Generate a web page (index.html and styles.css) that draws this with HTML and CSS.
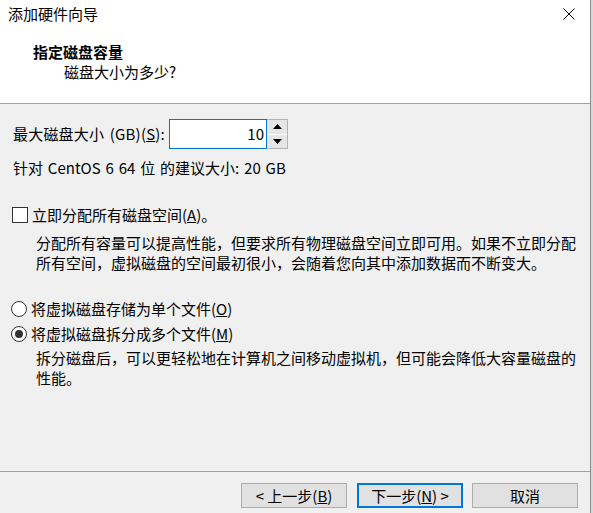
FILE: index.html
```html
<!DOCTYPE html>
<html lang="zh-CN">
<head>
<meta charset="utf-8">
<title>添加硬件向导</title>
<link rel="stylesheet" href="styles.css">
</head>
<body>
<div class="window">
  <div class="header">
    <div class="titlebar">
      <span class="title">添加硬件向导</span>
      <svg class="close" width="12" height="12" viewBox="0 0 12 12"><path d="M0.5 0.5 L11.5 11.5 M11.5 0.5 L0.5 11.5" stroke="#000" stroke-width="1" fill="none"/></svg>
    </div>
    <div class="heading">指定磁盘容量</div>
    <div class="subheading">磁盘大小为多少?</div>
  </div>
  <div class="content">
    <div class="size-row">
      <span class="label">最大磁盘大小 (GB)(<u>S</u>):</span>
      <div class="spin">
        <div class="spin-input">10</div>
        <div class="spin-buttons">
          <div class="spin-btn"><svg width="9" height="5" viewBox="0 0 9 5"><path d="M4.5 0 L9 5 L0 5 Z" fill="#000"/></svg></div>
          <div class="spin-btn"><svg width="9" height="5" viewBox="0 0 9 5"><path d="M0 0 L9 0 L4.5 5 Z" fill="#000"/></svg></div>
        </div>
      </div>
    </div>
    <div class="recommend">针对 CentOS 6 64 位 的建议大小: 20 GB</div>
    <div class="option check-option">
      <span class="checkbox"></span>
      <span>立即分配所有磁盘空间(<u>A</u>)。</span>
    </div>
    <p class="desc">分配所有容量可以提高性能，但要求所有物理磁盘空间立即可用。如果不立即分配所有空间，虚拟磁盘的空间最初很小，会随着您向其中添加数据而不断变大。</p>
    <div class="option radio-first">
      <span class="radio"></span>
      <span>将虚拟磁盘存储为单个文件(<u>O</u>)</span>
    </div>
    <div class="option radio-second">
      <span class="radio checked"></span>
      <span>将虚拟磁盘拆分成多个文件(<u>M</u>)</span>
    </div>
    <p class="desc desc-split">拆分磁盘后，可以更轻松地在计算机之间移动虚拟机，但可能会降低大容量磁盘的性能。</p>
  </div>
  <div class="footer">
    <button class="btn">&lt; 上一步(<u>B</u>)</button>
    <button class="btn btn-default">下一步(<u>N</u>) &gt;</button>
    <button class="btn btn-cancel">取消</button>
  </div>
</div>
</body>
</html>
```

FILE: styles.css
```css
html, body {
  margin: 0;
  padding: 0;
  background: #d9d9d9;
}
body {
  width: 593px;
  height: 513px;
  overflow: hidden;
  font-family: "Noto Sans CJK SC", sans-serif;
  font-size: 15px;
  line-height: 20px;
  color: #000;
}
.window {
  width: 590px;
  height: 513px;
  background: #f0f0f0;
  border-right: 1px solid #8a8a8a;
  display: flex;
  flex-direction: column;
}
.header {
  background: #fff;
  height: 103px;
  border-bottom: 1px solid #a0a0a0;
  box-sizing: content-box;
}
.titlebar {
  height: 28px;
  padding: 4px 0 0 8px;
  box-sizing: border-box;
  display: flex;
  align-items: flex-start;
  justify-content: space-between;
}
.close {
  margin: 4px 15px 0 0;
}
.heading {
  margin: 14px 0 0 33px;
  font-weight: bold;
}
.subheading {
  margin-left: 64px;
}
.content {
  flex: 1;
  padding: 15px 0 0 13px;
}
.size-row {
  display: flex;
  align-items: center;
  height: 30px;
}
.label {
  width: 156px;
  word-spacing: 2px;
  letter-spacing: 0.2px;
}
.spin {
  display: flex;
  height: 30px;
}
.spin-input {
  width: 98px;
  height: 30px;
  box-sizing: border-box;
  border: 1px solid #0078d7;
  background: #fff;
  text-align: right;
  padding: 4px 2px 0 0;
}
.spin-buttons {
  width: 21px;
  height: 30px;
  box-sizing: border-box;
  border: 1px solid #b4b4b4;
  border-left: none;
  display: flex;
  flex-direction: column;
  gap: 1px;
  background: #fff;
}
.spin-btn {
  flex: 1;
  background: #e6e6e6;
  display: flex;
  align-items: center;
  justify-content: center;
}
.recommend {
  margin-top: 9px;
  word-spacing: 1.5px;
}
.option {
  display: flex;
  align-items: center;
}
.check-option {
  margin-top: 27px;
}
.checkbox {
  width: 14px;
  height: 14px;
  border: 1px solid #333;
  background: #fff;
  margin: 0 4px 0 -1px;
}
.desc {
  margin: 8px 10px 0 23px;
}
.radio-first {
  margin-top: 26px;
}
.radio-second {
  margin-top: 5px;
}
.radio {
  width: 14px;
  height: 14px;
  border: 1px solid #333;
  border-radius: 50%;
  background: #fff;
  margin: 0 4px 0 -2px;
  display: flex;
  align-items: center;
  justify-content: center;
}
.radio.checked::after {
  content: "";
  width: 8px;
  height: 8px;
  border-radius: 50%;
  background: #333;
}
.desc-split {
  margin-top: 4px;
}
.footer {
  border-top: 1px solid #a0a0a0;
  display: flex;
  align-items: flex-start;
  justify-content: flex-end;
  padding: 11px 12px 0 0;
  box-sizing: border-box;
  height: 42px;
  gap: 10px;
}
.btn {
  width: 106px;
  height: 25px;
  background: #e1e1e1;
  border: 1px solid #adadad;
  font-family: inherit;
  font-size: 15px;
  line-height: 20px;
  color: #000;
  padding: 0;
  margin: 0;
}
.btn-default {
  border: 2px solid #0078d7;
}
.btn-cancel {
  margin-left: -1px;
}
```
